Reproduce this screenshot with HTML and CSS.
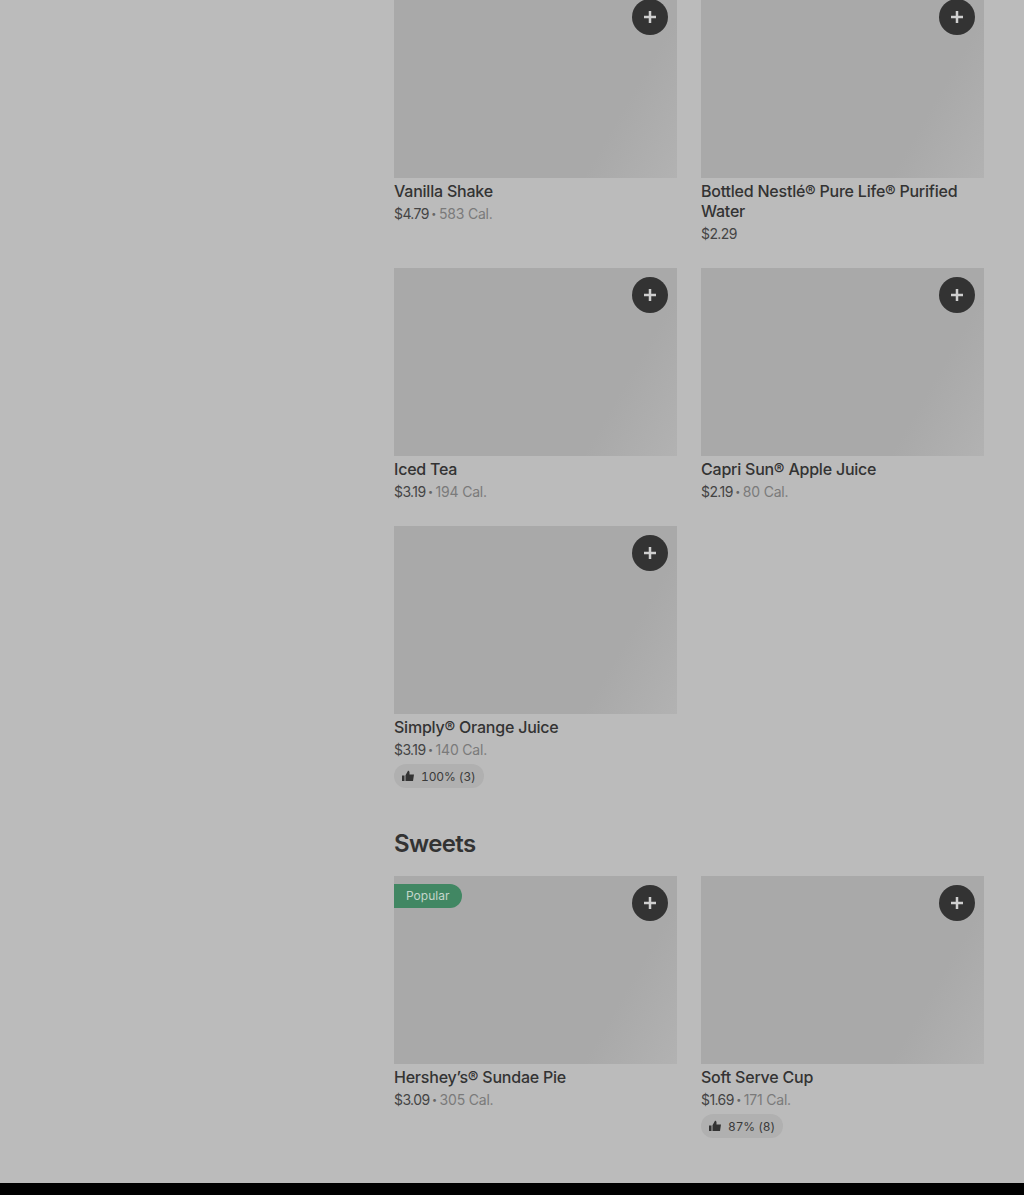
FILE: index.html
```html
<!DOCTYPE html>
<html lang="en">
<head>
<meta charset="utf-8">
<title>Menu</title>
<link rel="stylesheet" href="styles.css">
</head>
<body>
<main class="menu">
  <section class="section">
    <div class="grid">
      <article class="card">
        <div class="photo"><button class="add" aria-label="Add"><svg viewBox="0 0 12 12" class="plus"><path d="M4.75 0h2.5v4.75H12v2.5H7.25V12h-2.5V7.25H0v-2.5h4.75z"/></svg></button></div>
        <h3 class="name">Vanilla Shake</h3>
        <p class="meta"><span class="price">$4.79</span><span class="dot">•</span><span class="cal">583 Cal.</span></p>
      </article>
      <article class="card">
        <div class="photo"><button class="add" aria-label="Add"><svg viewBox="0 0 12 12" class="plus"><path d="M4.75 0h2.5v4.75H12v2.5H7.25V12h-2.5V7.25H0v-2.5h4.75z"/></svg></button></div>
        <h3 class="name">Bottled Nestlé® Pure Life® Purified Water</h3>
        <p class="meta"><span class="price">$2.29</span></p>
      </article>
      <article class="card">
        <div class="photo"><button class="add" aria-label="Add"><svg viewBox="0 0 12 12" class="plus"><path d="M4.75 0h2.5v4.75H12v2.5H7.25V12h-2.5V7.25H0v-2.5h4.75z"/></svg></button></div>
        <h3 class="name">Iced Tea</h3>
        <p class="meta"><span class="price">$3.19</span><span class="dot">•</span><span class="cal">194 Cal.</span></p>
      </article>
      <article class="card">
        <div class="photo"><button class="add" aria-label="Add"><svg viewBox="0 0 12 12" class="plus"><path d="M4.75 0h2.5v4.75H12v2.5H7.25V12h-2.5V7.25H0v-2.5h4.75z"/></svg></button></div>
        <h3 class="name">Capri Sun® Apple Juice</h3>
        <p class="meta"><span class="price">$2.19</span><span class="dot">•</span><span class="cal">80 Cal.</span></p>
      </article>
      <article class="card">
        <div class="photo"><button class="add" aria-label="Add"><svg viewBox="0 0 12 12" class="plus"><path d="M4.75 0h2.5v4.75H12v2.5H7.25V12h-2.5V7.25H0v-2.5h4.75z"/></svg></button></div>
        <h3 class="name">Simply® Orange Juice</h3>
        <p class="meta"><span class="price">$3.19</span><span class="dot">•</span><span class="cal">140 Cal.</span></p>
        <div class="chip"><svg viewBox="0 0 12 12" class="thumb"><path d="M0 5.5h2.5V11H0zM3.5 11V5.2L6 .8c.9 0 1.5.7 1.5 1.6V4.5H12l-1 6.5z"/></svg><span>100% (3)</span></div>
      </article>
    </div>
  </section>
  <section class="section">
    <h2 class="heading">Sweets</h2>
    <div class="grid">
      <article class="card">
        <div class="photo"><span class="badge">Popular</span><button class="add" aria-label="Add"><svg viewBox="0 0 12 12" class="plus"><path d="M4.75 0h2.5v4.75H12v2.5H7.25V12h-2.5V7.25H0v-2.5h4.75z"/></svg></button></div>
        <h3 class="name">Hershey’s® Sundae Pie</h3>
        <p class="meta"><span class="price">$3.09</span><span class="dot">•</span><span class="cal">305 Cal.</span></p>
      </article>
      <article class="card">
        <div class="photo"><button class="add" aria-label="Add"><svg viewBox="0 0 12 12" class="plus"><path d="M4.75 0h2.5v4.75H12v2.5H7.25V12h-2.5V7.25H0v-2.5h4.75z"/></svg></button></div>
        <h3 class="name">Soft Serve Cup</h3>
        <p class="meta"><span class="price">$1.69</span><span class="dot">•</span><span class="cal">171 Cal.</span></p>
        <div class="chip"><svg viewBox="0 0 12 12" class="thumb"><path d="M0 5.5h2.5V11H0zM3.5 11V5.2L6 .8c.9 0 1.5.7 1.5 1.6V4.5H12l-1 6.5z"/></svg><span>87% (8)</span></div>
      </article>
    </div>
  </section>
</main>
<footer class="footer"></footer>
</body>
</html>
```
FILE: styles.css
```css
* { box-sizing: border-box; }
html, body { margin: 0; height: 1195px; overflow: hidden; }
body {
  background: #bbbbbb;
  color: #333;
  font-family: "Inter", "Liberation Sans", sans-serif;
}
.menu {
  padding: 0 40px 45px 394px;
  margin-top: -10px;
}
.section + .section { margin-top: 40px; }
.grid {
  display: grid;
  grid-template-columns: 283px 283px;
  column-gap: 24px;
  row-gap: 24px;
}
.photo {
  position: relative;
  height: 188px;
  background: linear-gradient(120deg, #a9a9a9 0%, #a9a9a9 76%, #b2b2b2 100%);
}
.add {
  position: absolute;
  top: 9px;
  right: 9px;
  width: 36px;
  height: 36px;
  padding: 0;
  border: 0;
  border-radius: 50%;
  background: #333;
  display: flex;
  align-items: center;
  justify-content: center;
}
.plus { width: 12px; height: 12px; fill: #cfcfcf; }
.badge {
  position: absolute;
  top: 8px;
  left: 0;
  height: 24px;
  padding: 0 12px;
  width: 68px;
  border-radius: 0 12px 12px 0;
  background: #418763;
  color: #c4d6cb;
  font-size: 12px;
  line-height: 24px;
}
.name {
  margin: 3px 0 0;
  font-size: 16px;
  line-height: 20px;
  font-weight: 500;
  letter-spacing: -0.22px;
  color: #333;
}
.meta {
  display: flex;
  align-items: center;
  gap: 2.5px;
  margin: 3px 0 0;
  font-size: 14px;
  line-height: 20px;
}
.price { color: #444; letter-spacing: -0.6px; }
.dot { color: #666; font-size: 9px; }
.cal { color: #7a7a7a; letter-spacing: -0.2px; }
.chip {
  display: flex;
  align-items: center;
  gap: 7px;
  width: fit-content;
  height: 24px;
  margin-top: 4px;
  padding: 0 8px;
  border-radius: 12px;
  background: #b0b0b0;
  color: #3a3a3a;
  font-size: 12px;
  letter-spacing: -0.1px;
  font-variant-numeric: tabular-nums;
}
.thumb { width: 12px; height: 12px; fill: #333; }
.heading {
  margin: 0 0 16px;
  font-size: 24px;
  line-height: 32px;
  font-weight: 600;
  letter-spacing: -0.6px;
  color: #333;
}
.footer { height: 12px; background: #000; }
```
